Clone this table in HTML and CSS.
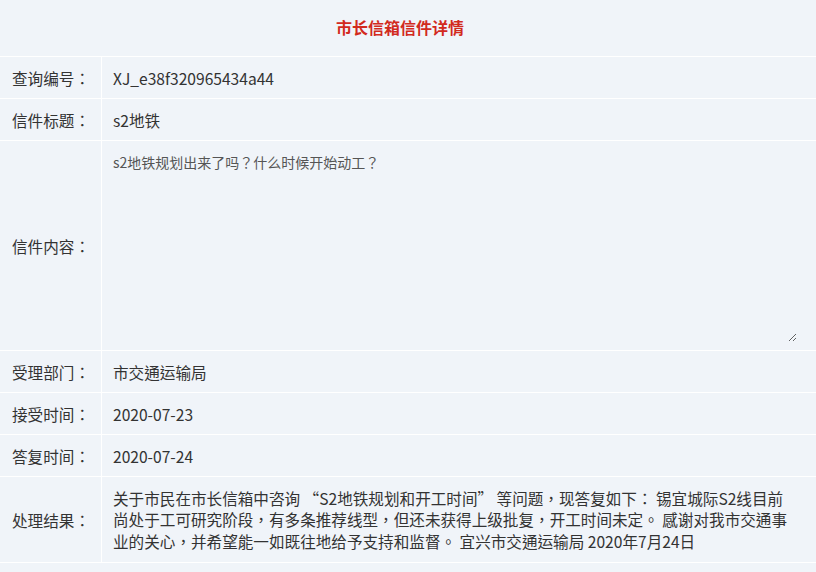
FILE: index.html
```html
<!DOCTYPE html>
<html lang="zh-CN">
<head>
    <meta charset="UTF-8">
    <meta name="viewport" content="width=device-width, initial-scale=1.0">
    <title>市长信箱信件详情</title>
    <link rel="stylesheet" href="styles.css">
</head>
<body>
    <!-- Letter Detail -->
    <div class="letter">
        <h2 class="letter-title">市长信箱信件详情</h2>
        <table class="detail-table">
            <tr>
                <td class="label">查询编号：</td>
                <td class="value">XJ_e38f320965434a44</td>
            </tr>
            <tr>
                <td class="label">信件标题：</td>
                <td class="value">s2地铁</td>
            </tr>
            <tr class="content-row">
                <td class="label">信件内容：</td>
                <td class="value">
                    <textarea class="content-box" readonly>s2地铁规划出来了吗？什么时候开始动工？</textarea>
                </td>
            </tr>
            <tr>
                <td class="label">受理部门：</td>
                <td class="value">市交通运输局</td>
            </tr>
            <tr>
                <td class="label">接受时间：</td>
                <td class="value">2020-07-23</td>
            </tr>
            <tr>
                <td class="label">答复时间：</td>
                <td class="value">2020-07-24</td>
            </tr>
            <tr class="result-row">
                <td class="label">处理结果：</td>
                <td class="value">关于市民在市长信箱中咨询 “S2地铁规划和开工时间” 等问题，现答复如下： 锡宜城际S2线目前尚处于工可研究阶段，有多条推荐线型，但还未获得上级批复，开工时间未定。 感谢对我市交通事业的关心，并希望能一如既往地给予支持和监督。 宜兴市交通运输局 2020年7月24日</td>
            </tr>
        </table>
    </div>
</body>
</html>
```
FILE: styles.css
```css
/* General Styles */
body {
    margin: 0;
    padding: 0;
    background-color: #f0f4f9;
    font-family: "Noto Sans CJK TC", "Noto Sans CJK SC", sans-serif;
    font-feature-settings: "locl" 0;
    color: #333;
}

.letter-title {
    margin: 0;
    height: 56px;
    line-height: 54px;
    text-align: center;
    padding-right: 16px;
    font-size: 16px;
    font-weight: bold;
    color: #d22a1e;
}

/* Detail Table */
.detail-table {
    width: 100%;
    border-collapse: collapse;
    border-top: 1px solid #fff;
}

.detail-table td {
    border-bottom: 1px solid #fff;
    font-size: 15.6px;
    height: 41px;
    padding: 0;
    vertical-align: middle;
}

.detail-table .label {
    width: 89px;
    padding-left: 12px;
    border-right: 1px solid #fff;
    white-space: nowrap;
}

.detail-table .value {
    padding-left: 11px;
    padding-right: 24px;
}

.content-row td {
    height: 198px;
}

.content-row .value {
    padding: 3px 19px 8px 2px;
}

.content-box {
    display: block;
    width: 100%;
    height: 198px;
    box-sizing: border-box;
    margin: 0;
    padding: 8px 9px;
    border: none;
    outline: none;
    background: transparent;
    font-family: "Noto Sans CJK TC", "Noto Sans CJK SC", sans-serif;
    font-feature-settings: "locl" 0;
    font-size: 14px;
    color: #555;
    resize: vertical;
}

.result-row td {
    height: 84px;
}

.result-row .value {
    line-height: 21.5px;
    padding-top: 1px;
}
```
